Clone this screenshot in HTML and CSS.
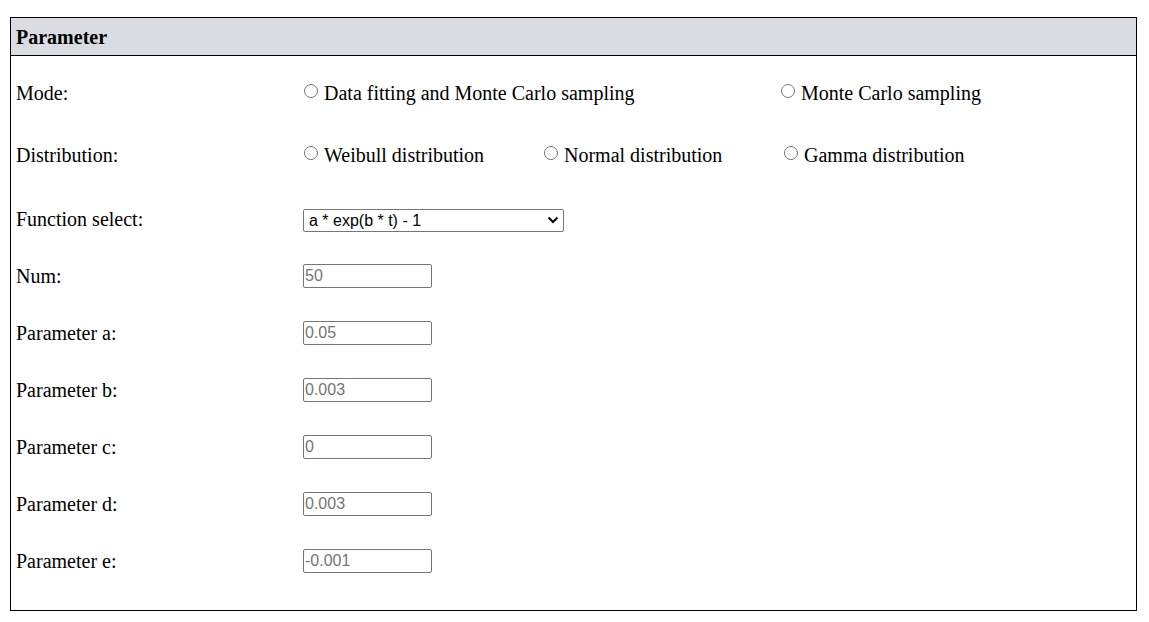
FILE: index.html
```html
<!DOCTYPE html>
<html>
<head>
<meta charset="utf-8">
<link rel="stylesheet" href="styles.css">
</head>
<body>
<div class="panel">
  <div class="panel-head">Parameter</div>
  <div class="panel-body">
    <div class="row row-radio">
      <div class="label">Mode:</div>
      <div class="opts">
        <label class="opt opt-wide"><input type="radio" name="mode">Data fitting and Monte Carlo sampling</label>
        <label class="opt"><input type="radio" name="mode">Monte Carlo sampling</label>
      </div>
    </div>
    <div class="row row-radio">
      <div class="label">Distribution:</div>
      <div class="opts">
        <label class="opt opt-mid"><input type="radio" name="dist">Weibull distribution</label>
        <label class="opt opt-mid"><input type="radio" name="dist">Normal distribution</label>
        <label class="opt"><input type="radio" name="dist">Gamma distribution</label>
      </div>
    </div>
    <div class="row row-func">
      <div class="label">Function select:</div>
      <div class="sel-wrap">
        <select class="sel"><option>a * exp(b * t) - 1</option></select>
        <svg class="chev" width="12" height="8" viewBox="0 0 12 8"><path d="M1.5 1.5 L6 6 L10.5 1.5" fill="none" stroke="#000" stroke-width="2"/></svg>
      </div>
    </div>
    <div class="row row-input">
      <div class="label">Num:</div>
      <input class="txt" type="text" placeholder="50">
    </div>
    <div class="row row-input">
      <div class="label">Parameter a:</div>
      <input class="txt" type="text" placeholder="0.05">
    </div>
    <div class="row row-input">
      <div class="label">Parameter b:</div>
      <input class="txt" type="text" placeholder="0.003">
    </div>
    <div class="row row-input">
      <div class="label">Parameter c:</div>
      <input class="txt" type="text" placeholder="0">
    </div>
    <div class="row row-input">
      <div class="label">Parameter d:</div>
      <input class="txt" type="text" placeholder="0.003">
    </div>
    <div class="row row-input">
      <div class="label">Parameter e:</div>
      <input class="txt" type="text" placeholder="-0.001">
    </div>
  </div>
</div>
</body>
</html>
```
FILE: styles.css
```css
html, body {
  margin: 0;
  padding: 0;
  background: #fff;
}
body {
  font-family: "Liberation Serif", "Times New Roman", serif;
  font-size: 20px;
  color: #000;
}
.panel {
  margin: 17px 0 0 10px;
  width: 1127px;
  height: 594px;
  box-sizing: border-box;
  border: 1px solid #000;
}
.panel-head {
  box-sizing: border-box;
  border-bottom: 1px solid #000;
  background: #d9dde1;
  font-weight: bold;
  font-size: 20px;
  padding-left: 5px;
  line-height: 38px;
  height: 38px;
}
.panel-body {
  padding: 6px 0 0 5px;
  display: flex;
  flex-direction: column;
}
.row {
  display: flex;
  align-items: center;
}
.row-radio { height: 62px; }
.row-func { height: 62px; box-sizing: border-box; padding-top: 4px; }
.row-input {
  height: 57px;
  box-sizing: border-box;
  padding-top: 16px;
  align-items: flex-start;
}
.row-input .label { line-height: 24px; }
.label {
  width: 287px;
  flex: none;
}
.opts {
  display: flex;
  align-items: center;
}
.opt {
  display: flex;
  align-items: center;
  white-space: nowrap;
}
.opt input {
  margin: 0 6px 0 1px;
  width: 14px;
  height: 14px;
  position: relative;
  top: -2px;
}
.opt-wide { width: 477px; }
.opt-mid { width: 240px; }
.sel-wrap {
  position: relative;
  width: 261px;
  height: 23px;
}
.sel {
  -webkit-appearance: none;
  appearance: none;
  width: 261px;
  height: 23px;
  box-sizing: border-box;
  font-family: "Liberation Sans", Arial, sans-serif;
  font-size: 16px;
  margin: 0;
  padding: 0 0 0 5px;
  border: 1px solid #767676;
  border-radius: 2px;
  background: #fff;
  color: #000;
}
.chev {
  position: absolute;
  right: 5px;
  top: 8px;
  pointer-events: none;
}
.txt {
  width: 129px;
  height: 24px;
  box-sizing: border-box;
  margin: 0;
  padding: 1px 1px;
  font-family: "Liberation Sans", Arial, sans-serif;
  font-size: 16px;
  border: 1px solid #767676;
  border-radius: 2px;
}
.txt::placeholder {
  color: #757575;
}
```
